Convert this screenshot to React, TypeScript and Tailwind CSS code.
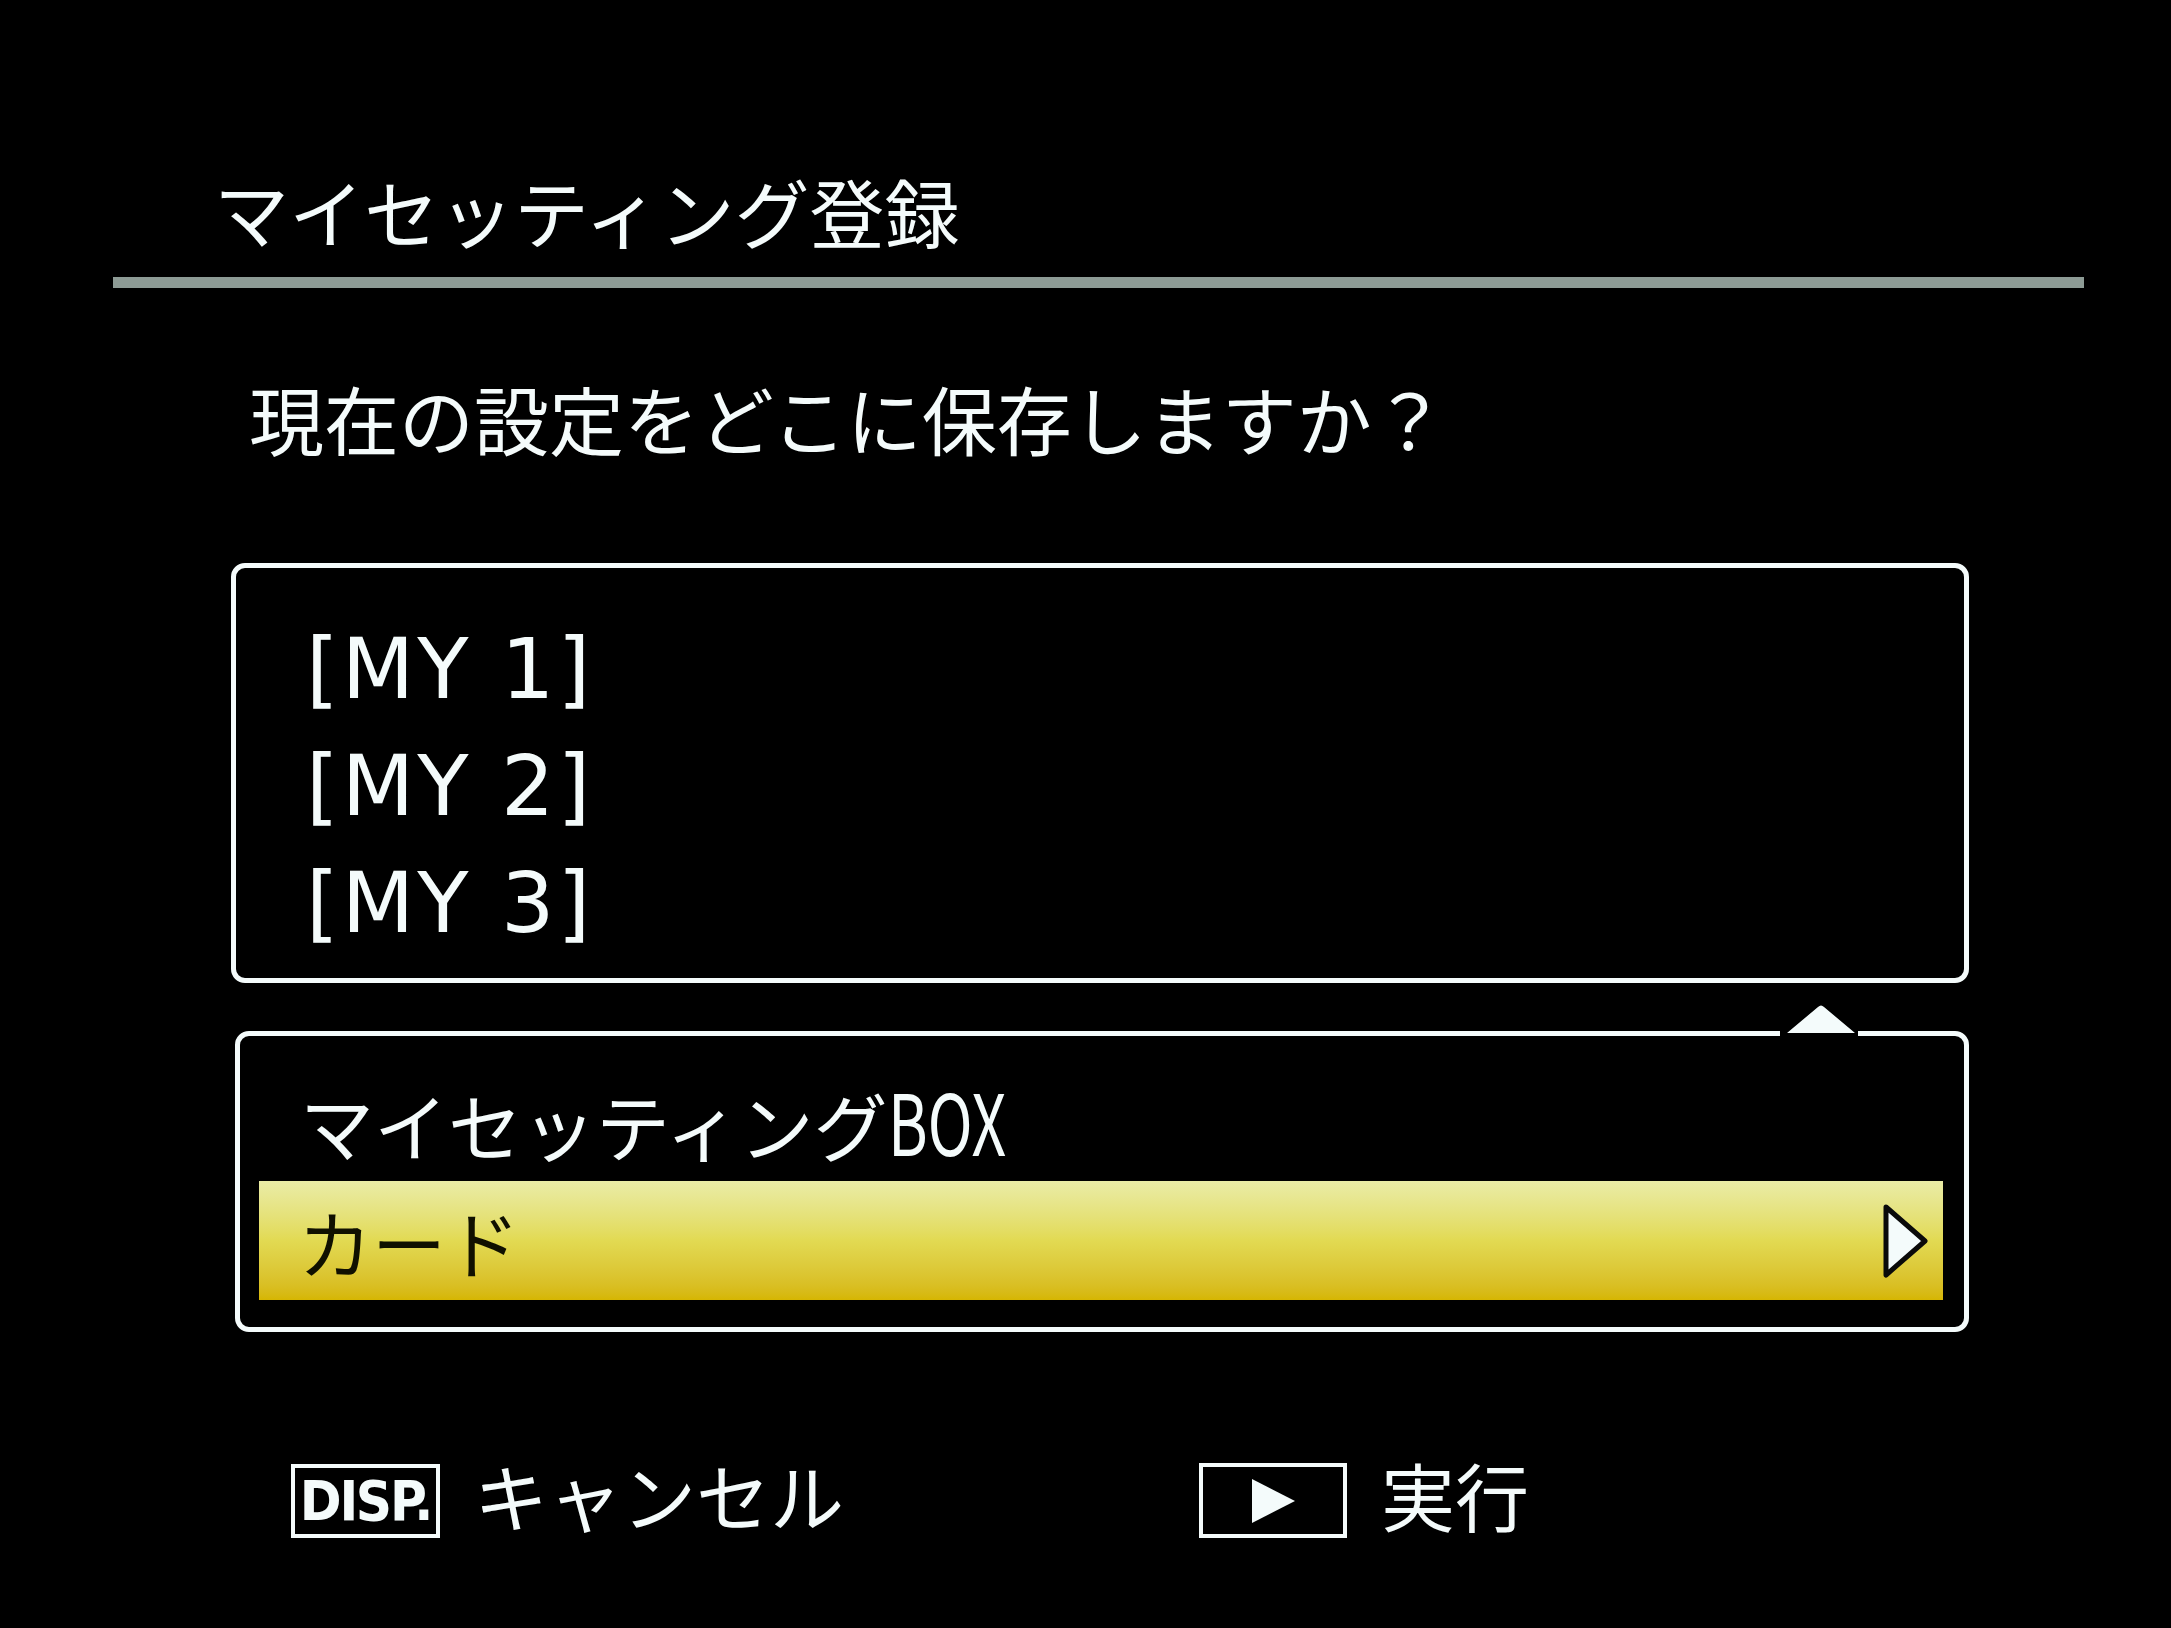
const jp = { fontFamily: '"Noto Sans CJK JP", "Noto Sans", sans-serif' };
const latin = { fontFamily: '"DejaVu Sans", "Noto Sans", sans-serif' };

const slots = ['[MY 1]', '[MY 2]', '[MY 3]'];

export default function App() {
  return (
    <div className="w-[2171px] h-[1628px] bg-black text-[#f4fbfb] overflow-hidden pt-[173px]" style={jp}>
      {/* header */}
      <div className="pl-[214px] h-[74px] text-[75px] leading-none">マイセッティング登録</div>
      <div className="mt-[30px] ml-[113px] w-[1971px] h-[11px] bg-[#8d9b95]" />

      <div className="mt-[92px] pl-[249px] h-[72px] text-[75px] leading-none">現在の設定をどこに保存しますか？</div>

      {/* slot list */}
      <div className="mt-[111px] ml-[231px] w-[1738px] h-[420px] border-[5px] border-[#f4fbfb] rounded-[14px] pt-[59px] pl-[70px] flex flex-col gap-[33px]">
        {slots.map((s) => (
          <div key={s} className="h-[84px] text-[84px] leading-none whitespace-pre tracking-[0.035em]" style={latin}>
            {s}
          </div>
        ))}
      </div>

      {/* destination */}
      <div className="relative mt-[48px] ml-[235px] w-[1734px] h-[301px] border-[5px] border-[#f4fbfb] rounded-[14px] pt-[42px]">
        <div className="absolute left-[1540px] -top-[6px] w-[78px] h-[7px] bg-black" />
        <svg className="absolute left-[1545px] -top-[32px]" width="72" height="30" viewBox="0 0 72 30">
          <path d="M2 29 L33 3 Q36 0 39 3 L70 29 Z" fill="#f4fbfb" />
        </svg>
        <div className="pl-[60px] h-[74px] text-[74px] leading-none whitespace-nowrap">
          マイセッティング
          <span className="inline-block text-[84px] leading-none scale-x-[0.72] origin-left align-baseline">BOX</span>
        </div>
        <div className="mt-[29px] ml-[19px] w-[1684px] h-[119px] bg-gradient-to-b from-[#eaeca6] via-[#e2da52] to-[#d6b600] flex items-center justify-between pl-[39px] pr-[14px]">
          <span className="text-[74px] leading-none text-[#101000]">カード</span>
          <svg width="48" height="78" viewBox="0 0 48 78">
            <path d="M5 5 L44 39 L5 73 Z" fill="#f4fbfb" stroke="#0a0a0a" strokeWidth="5" strokeLinejoin="round" />
          </svg>
        </div>
      </div>

      {/* footer */}
      <div className="mt-[131px] pl-[291px] flex items-center">
        <div className="w-[908px] flex items-center">
          <div
            className="w-[149px] h-[74px] border-[4px] border-[#f4fbfb] flex items-center justify-center text-[56px] font-bold leading-none tracking-[-0.04em]"
            style={{ fontFamily: '"DejaVu Sans Condensed", "DejaVu Sans", sans-serif' }}
          >
            DISP.
          </div>
          <span className="ml-[34px] -mt-[14px] text-[74px] leading-none">キャンセル</span>
        </div>
        <div className="w-[148px] h-[75px] border-[4px] border-[#f4fbfb] flex items-center justify-center">
          <svg width="46" height="46" viewBox="0 0 46 46">
            <path d="M2 1 L45 23 L2 45 Z" fill="#f4fbfb" />
          </svg>
        </div>
        <span className="ml-[34px] -mt-[14px] text-[74px] leading-none">実行</span>
      </div>
    </div>
  );
}
